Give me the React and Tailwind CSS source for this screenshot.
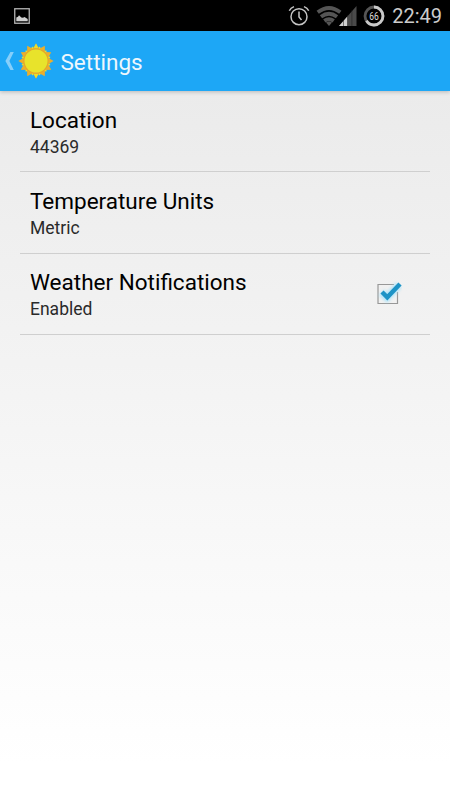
import React, { useState } from "react";

const RAYS = 12;

// Points of a star polygon centred on 0,0
const starPoints = (count, outer, inner, offset = 0) => {
  const points = [];
  for (let i = 0; i < count * 2; i++) {
    const r = i % 2 === 0 ? outer : inner;
    const a = (Math.PI * i) / count - Math.PI / 2 + offset;
    points.push(`${(r * Math.cos(a)).toFixed(2)},${(r * Math.sin(a)).toFixed(2)}`);
  }
  return points.join(" ");
};

const SunIcon = () => (
  <svg width="36" height="36" viewBox="-18 -18 36 36" className="shrink-0">
    <polygon points={starPoints(RAYS, 15, 11.5, Math.PI / RAYS)} fill="#e9e02c" />
    <polygon points={starPoints(RAYS, 17.6, 12.6)} fill="#ecae2c" />
    {/* yellow tips at the top and bottom */}
    <path d="M-2.2 -13L0 -17.4L2.2 -13ZM-2.2 13L0 17.4L2.2 13Z" fill="#e9e02c" />
    <circle r="12.6" fill="#e2a82c" />
    <circle r="11.5" fill="#e8e32b" />
  </svg>
);

const PictureIcon = () => (
  <svg width="16" height="16" viewBox="0 0 16 16">
    <rect x="0.75" y="0.75" width="14.5" height="14.5" fill="none" stroke="#b4b4b4" strokeWidth="1.3" />
    <path d="M2.3 13.3V9.5L4 8.7L5 7.3L7.3 9.5L9 9.8L10.5 9L13.7 11V13.3Z" fill="#cfcfcf" />
  </svg>
);

const AlarmIcon = () => (
  <svg width="22" height="22" viewBox="0 0 22 22" fill="none" stroke="#c4c4c4" strokeWidth="1.5">
    <circle cx="11" cy="11.7" r="8" />
    <path d="M11 6.5V12L13.5 15" />
    <path d="M1.3 5.8Q2.7 2.8 6 1.6M20.7 5.8Q19.3 2.8 16 1.6" />
  </svg>
);

const WifiIcon = () => (
  <svg width="26" height="20" viewBox="0 0 26 20" fill="none" stroke="#555555" strokeWidth="3.8">
    <path d="M1.7 6.3Q13 -2.2 24.3 6.3" />
    <path d="M5 10.8Q13 4.8 21 10.8" />
    <path d="M8.3 14.9Q13 11.5 17.7 14.9" />
    <path d="M10 16.4Q13 14.5 16 16.4L13 20Z" fill="#555555" stroke="none" />
  </svg>
);

const SignalIcon = () => (
  <svg width="18" height="20" viewBox="0 0 18 20">
    <path d="M0 20L17.5 0V20Z" fill="#4a4a4a" />
    <path d="M0 20L8.5 10.3V20Z" fill="#d0d0d0" />
    <path d="M4.5 14V20M8.5 9V20M12.9 4V20" stroke="#1c1c1c" strokeWidth="0.5" />
  </svg>
);

const BatteryIcon = ({ level }) => (
  <svg width="22" height="22" viewBox="0 0 22 22">
    <circle cx="11" cy="11" r="9" fill="none" stroke="#555555" strokeWidth="2.8" />
    <circle
      cx="11"
      cy="11"
      r="9"
      fill="none"
      stroke="#c9c9c9"
      strokeWidth="2.8"
      pathLength="100"
      strokeDasharray={`${level} 100`}
      transform="rotate(-90 11 11)"
    />
    <text
      x="11"
      y="14.5"
      textAnchor="middle"
      textLength="9.5"
      lengthAdjust="spacingAndGlyphs"
      className="fill-[#dddddd] text-[10px]"
    >
      {level}
    </text>
  </svg>
);

const StatusBar = () => (
  <div className="flex h-[31px] items-center bg-black pr-2 pl-3.5">
    <PictureIcon />
    <div className="ml-auto flex items-center">
      <AlarmIcon />
      <div className="ml-[6px] flex items-end">
        <WifiIcon />
        <div className="-ml-[3px]">
          <SignalIcon />
        </div>
      </div>
      <div className="ml-[6px]">
        <BatteryIcon level={66} />
      </div>
      <span className="ml-[7px] text-[20px] leading-none text-[#cccccc]">22:49</span>
    </div>
  </div>
);

const ActionBar = () => (
  <header className="relative flex h-[60px] items-center bg-[#1da7f6] pl-[5px] shadow-[0_1px_4px_rgba(0,0,0,0.22)]">
    <svg width="9" height="18" viewBox="0 0 9 18" className="shrink-0">
      <path d="M5.4 0H8.8L4.4 9L8.8 18H5.4L0.4 9Z" fill="#86cffa" />
    </svg>
    <div className="ml-[4px]">
      <SunIcon />
    </div>
    <h1 className="ml-[6.5px] pt-[2px] text-[22.5px] leading-none text-[#eef7fd]">Settings</h1>
  </header>
);

const CheckBox = ({ checked, onChange }) => (
  <button onClick={onChange} role="checkbox" aria-checked={checked} className="mr-7 pb-[2px]">
    <svg width="28" height="28" viewBox="0 0 28 28" fill="none">
      <path d="M20 5.5H4V24.5H23.5V13" stroke="#989898" strokeWidth="1.2" />
      {checked && (
        <>
          <path d="M7.5 13.5L13 18.5L25 6" stroke="#9fe0fa" strokeWidth="7.5" className="opacity-80 blur-[1.5px]" />
          <path d="M8 13L13.3 18.3L26 5" stroke="#1d93c6" strokeWidth="4.4" />
        </>
      )}
    </svg>
  </button>
);

const PreferenceRow = ({ title, summary, children }) => (
  <div className="flex h-[81.25px] items-center border-b border-[#cfcfcf] pl-2.5">
    <div className="flex-1 pt-[5px]">
      <div className="text-[22.5px] leading-[26px] text-black">{title}</div>
      <div className="text-[17.5px] leading-[28px] text-[#2a2a2a]">{summary}</div>
    </div>
    {children}
  </div>
);

export default function App() {
  const [notify, setNotify] = useState(true);

  return (
    <div className="flex h-screen w-full flex-col overflow-hidden bg-white font-['Roboto',sans-serif]">
      <StatusBar />
      <ActionBar />
      <main className="flex-1 bg-linear-to-b from-[#ebebeb] to-white to-95% px-5">
        <PreferenceRow title="Location" summary="44369" />
        <PreferenceRow title="Temperature Units" summary="Metric" />
        <PreferenceRow title="Weather Notifications" summary={notify ? "Enabled" : "Disabled"}>
          <CheckBox checked={notify} onChange={() => setNotify(!notify)} />
        </PreferenceRow>
      </main>
    </div>
  );
}
